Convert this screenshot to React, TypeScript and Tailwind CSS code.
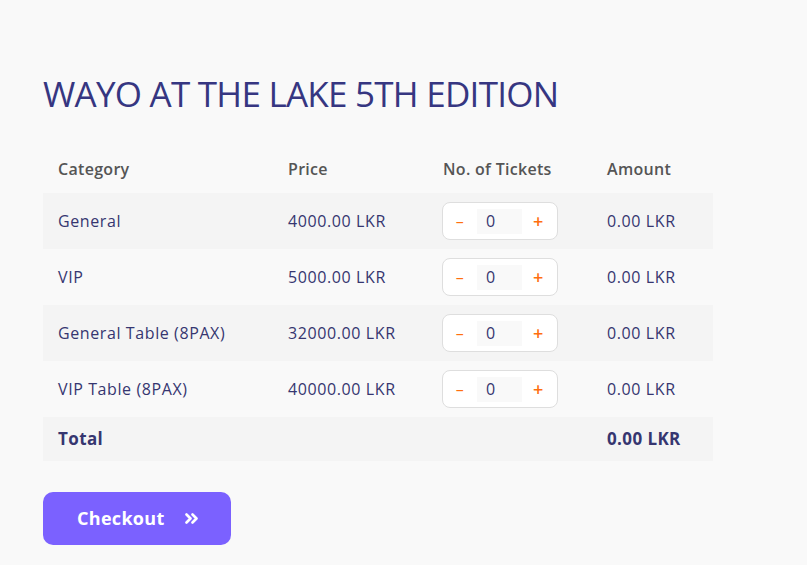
import { useState } from 'react';

type Category = { name: string; price: number };

const categories: Category[] = [
  { name: 'General', price: 4000 },
  { name: 'VIP', price: 5000 },
  { name: 'General Table (8PAX)', price: 32000 },
  { name: 'VIP Table (8PAX)', price: 40000 },
];

const fmt = (n: number) => `${n.toFixed(2)} LKR`;

function Stepper({ value, onChange }: { value: number; onChange: (v: number) => void }) {
  return (
    <div className="flex h-[38px] w-[116px] items-center rounded-lg border border-[#dedede] bg-white">
      <button
        type="button"
        onClick={() => onChange(Math.max(0, value - 1))}
        className="w-[34px] text-center text-[16px] text-[#ff6f0f]"
      >
        –
      </button>
      <div className="flex h-[25px] w-[45px] items-center bg-[#f9f9f9] pl-[9px] text-[16px] tracking-[0.7px] text-[#363670]">
        {value}
      </div>
      <button
        type="button"
        onClick={() => onChange(value + 1)}
        className="w-[35px] pr-[2px] text-center text-[18px] font-semibold text-[#ff6f0f]"
      >
        +
      </button>
    </div>
  );
}

export default function App() {
  const [counts, setCounts] = useState<number[]>(categories.map(() => 0));
  const total = categories.reduce((sum, c, i) => sum + c.price * counts[i], 0);

  return (
    <div className="min-h-[565px] bg-[#f9f9f9] px-[43px] pt-[72px] font-['Open_Sans',sans-serif]">
      <h1 className="text-[35px] leading-[44px] tracking-[-0.75px] text-[#363681]">
        WAYO AT THE LAKE 5TH EDITION
      </h1>

      <div className="mt-[29px] w-[670px]">
        <div className="grid h-[48px] grid-cols-[230px_155px_164px_121px] items-center text-[16px] font-semibold tracking-[0.3px] text-[#555555]">
          <div className="pl-[15px]">Category</div>
          <div className="pl-[15px]">Price</div>
          <div className="pl-[15px]">No. of Tickets</div>
          <div className="pl-[15px]">Amount</div>
        </div>
        {categories.map((c, i) => (
          <div
            key={c.name}
            className={`grid h-[56px] grid-cols-[230px_155px_164px_121px] items-center text-[16px] tracking-[0.6px] text-[#363670] ${
              i % 2 === 0 ? 'bg-[#f4f4f4]' : ''
            }`}
          >
            <div className="pl-[15px]">{c.name}</div>
            <div className="pl-[15px]">{fmt(c.price)}</div>
            <div className="pl-[14px]">
              <Stepper
                value={counts[i]}
                onChange={(v) => setCounts((prev) => prev.map((p, j) => (j === i ? v : p)))}
              />
            </div>
            <div className="pl-[15px]">{fmt(c.price * counts[i])}</div>
          </div>
        ))}
        <div className="grid h-[44px] grid-cols-[230px_155px_164px_121px] items-center bg-[#f4f4f4] text-[17px] font-bold tracking-[0.4px] text-[#363670]">
          <div className="pl-[15px]">Total</div>
          <div />
          <div />
          <div className="pl-[15px]">{fmt(total)}</div>
        </div>
      </div>

      <button
        type="button"
        className="mt-[31px] flex h-[53px] w-[188px] items-center gap-[20px] rounded-[10px] bg-[#7b61ff] pl-[34px] text-[18px] font-bold tracking-[0.3px] text-white"
      >
        Checkout
        <svg width="13" height="11" viewBox="0 0 13 11" fill="none" stroke="white" strokeWidth="2.6" strokeLinecap="round" strokeLinejoin="round">
          <path d="M1.5 1.5l4 4-4 4M7.5 1.5l4 4-4 4" />
        </svg>
      </button>
    </div>
  );
}
